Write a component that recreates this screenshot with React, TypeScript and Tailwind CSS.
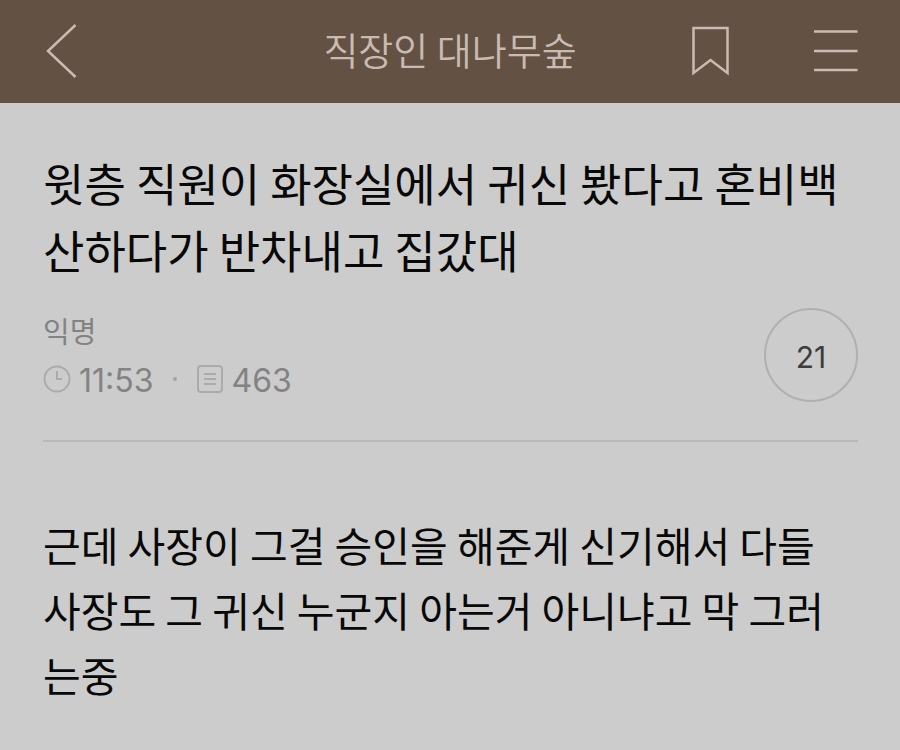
import React from "react";

export default function App() {
  return (
    <div className="min-h-screen bg-[#cccccc] font-['Noto_Sans_CJK_KR',sans-serif] text-[#080808]">
      <header className="grid h-[103px] grid-cols-[1fr_auto_1fr] items-center bg-[#635144] px-[42px] pb-[2px] text-[#c9bbb2]">
        <button type="button" aria-label="뒤로" className="justify-self-start">
          <svg className="block" width="36" height="56" viewBox="0 0 36 56" fill="none" stroke="currentColor" strokeWidth="2.5">
            <path d="M33.5 2 6 28 33.5 54" />
          </svg>
        </button>
        <h1 className="pb-[4px] text-[38px] leading-[48px] font-[350]">직장인 대나무숲</h1>
        <div className="flex items-center gap-[82px] justify-self-end">
          <button type="button" aria-label="북마크">
            <svg className="block" width="40" height="50" viewBox="0 0 40 50" fill="none" stroke="currentColor" strokeWidth="2.5">
              <path d="M3.5 2H37.5V47L20.5 34 3.5 47Z" />
            </svg>
          </button>
          <button type="button" aria-label="메뉴">
            <svg className="block" width="46" height="44" viewBox="0 0 46 44" fill="none" stroke="currentColor" strokeWidth="2.5">
              <path d="M2 2.5H45.5M2 22H45.5M2 41H45.5" />
            </svg>
          </button>
        </div>
      </header>
      <main className="pt-[46px] pr-[42px] pl-[43px]">
        <h2 className="text-[45px] leading-[67px] break-all">윗층 직원이 화장실에서 귀신 봤다고 혼비백산하다가 반차내고 집갔대</h2>
        <div className="mt-[22px] flex items-center justify-between border-b-2 border-[#b9b9b9] pb-[35px]">
          <div className="text-[#838383]">
            <p className="pt-[2px] text-[29px] leading-[46px]">익명</p>
            <div className="flex items-center pt-[4px] font-['Inter',sans-serif] text-[32px] leading-[48px]">
              <svg className="mb-[4px]" width="28" height="28" viewBox="0 0 28 28" fill="none" stroke="#ababab" strokeWidth="2">
                <circle cx="14" cy="14" r="12.5" />
                <path d="M14 6V14H19" />
              </svg>
              <span className="ml-[8px]">11:53</span>
              <span className="mx-[20px] mb-[4px] size-[4px] rounded-full bg-[#a3a3a3]" />
              <svg className="mb-[4px]" width="26" height="28" viewBox="0 0 26 28" fill="none" stroke="#ababab" strokeWidth="2">
                <rect x="1" y="1" width="24" height="26" rx="3" />
                <path d="M7 9H19M7 14H19M7 19H19" />
              </svg>
              <span className="ml-[8px]">463</span>
            </div>
          </div>
          <button type="button" className="size-[94px] rounded-full border-2 border-[#b0b0b0] pt-[4px] font-['Inter',sans-serif] text-[30px] text-[#3c3c3c]">21</button>
        </div>
        <p className="mt-[70px] text-[41px] leading-[65px] break-all">근데 사장이 그걸 승인을 해준게 신기해서 다들 사장도 그 귀신 누군지 아는거 아니냐고 막 그러는중</p>
      </main>
    </div>
  );
}
